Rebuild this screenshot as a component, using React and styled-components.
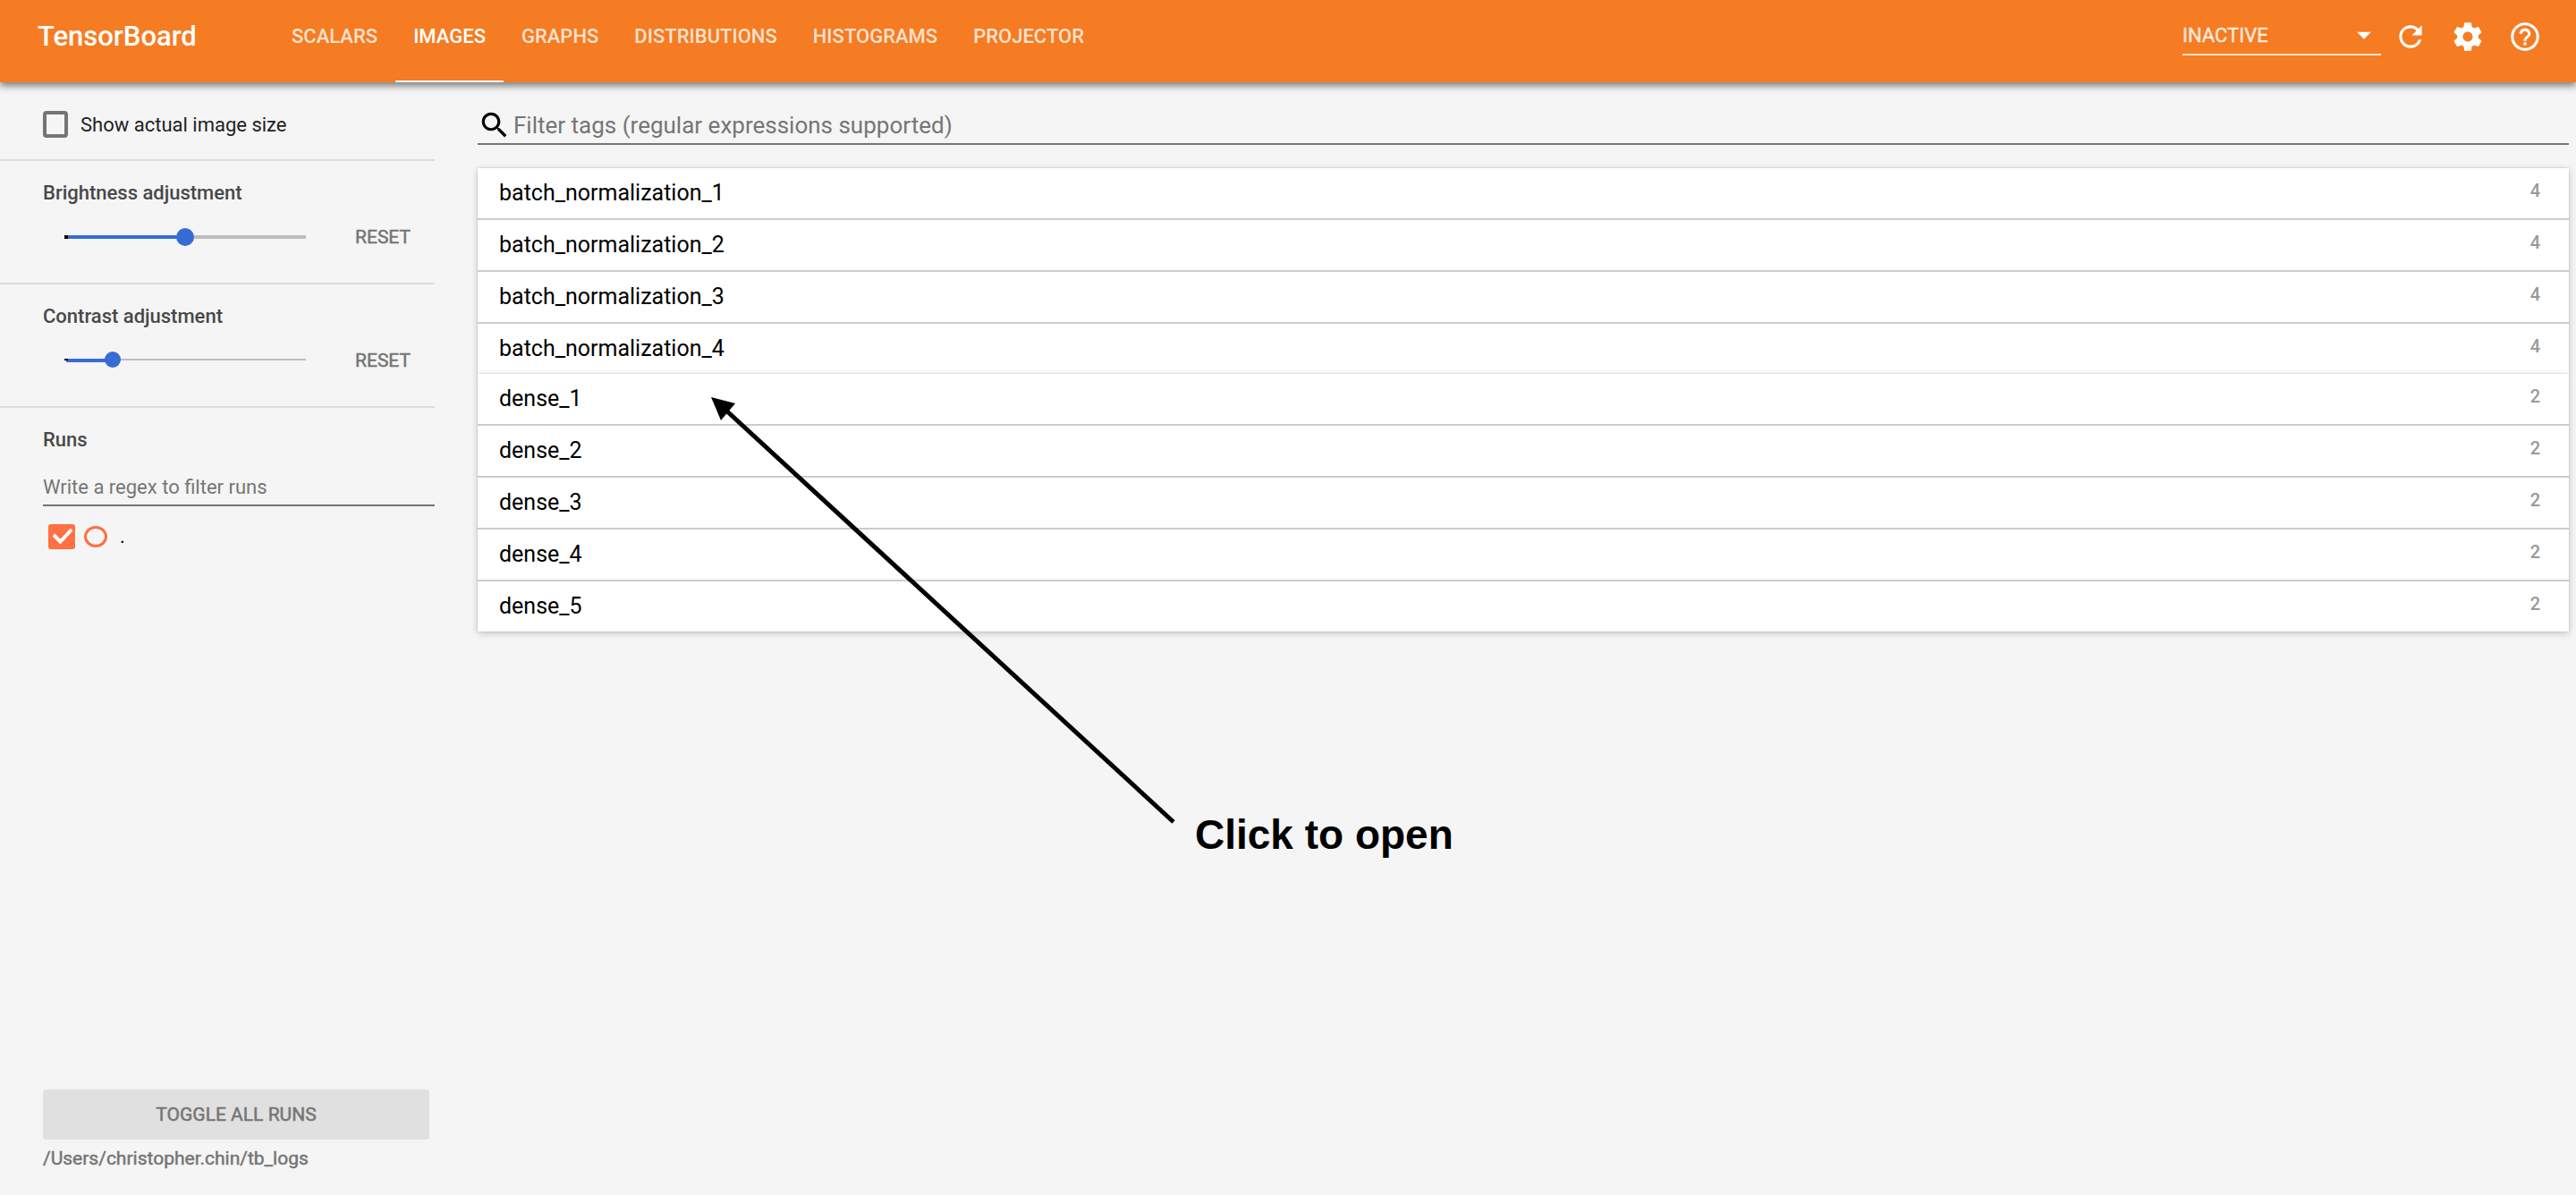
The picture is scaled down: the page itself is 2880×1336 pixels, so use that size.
import React, { useState } from "react";
import styled, { createGlobalStyle } from "styled-components";

const GlobalStyle = createGlobalStyle`
  *, *::before, *::after { box-sizing: border-box; }
  body { margin: 0; background: #f5f5f5; font-family: Roboto, "Liberation Sans", sans-serif; }
  button, input, select { font-family: inherit; margin: 0; }
`;

const Page = styled.div`
  display: flex;
  flex-direction: column;
  min-height: 100vh;
  position: relative;
`;

const Toolbar = styled.header`
  display: flex;
  align-items: stretch;
  height: 92px;
  padding: 0 26px 0 42px;
  background: #f57c22;
  color: #fff;
  box-shadow: 0 4px 8px rgba(0, 0, 0, 0.5);
`;

const Title = styled.h1`
  width: 264px;
  margin: 0;
  font-size: 31px;
  font-weight: 500;
  line-height: 82px;
`;

const Tabs = styled.nav`
  display: flex;
  flex: 1;
`;

const Tab = styled.a`
  padding: 0 20px;
  font-size: 22px;
  font-weight: 500;
  line-height: 82px;
  text-decoration: none;
  color: ${(p) => (p.$active ? "#fff" : "rgba(255, 255, 255, 0.78)")};
  border-bottom: 2px solid ${(p) => (p.$active ? "#fff" : "transparent")};
`;

const Actions = styled.div`
  display: flex;
  align-items: flex-start;
  padding-top: 18px;
`;

const SelectWrap = styled.label`
  display: flex;
  align-items: center;
  width: 222px;
  height: 44px;
  border-bottom: 2px solid rgba(255, 255, 255, 0.78);
`;

const StatusSelect = styled.select`
  flex: 1;
  appearance: none;
  border: 0;
  padding: 2px 0 0;
  background: transparent;
  color: rgba(255, 255, 255, 0.78);
  font-size: 22px;
  line-height: 44px;
  -webkit-text-stroke: 0.5px rgba(255, 255, 255, 0.78);
`;

const Caret = styled.svg`
  width: 38px;
  height: 38px;
`;

const IconButton = styled.button`
  display: flex;
  padding: 4px 12px 4px 14px;
  border: 0;
  background: none;
  color: #fff;
  svg { width: 38px; height: 38px; fill: currentColor; }
`;

const Body = styled.div`
  display: flex;
  flex: 1;
`;

const Sidebar = styled.aside`
  display: flex;
  flex-direction: column;
  width: 486px;
  flex: none;
  margin-right: 48px;
`;

const Section = styled.section`
  display: flex;
  flex-direction: column;
  height: ${(p) => p.$height}px;
  padding-left: 48px;
  border-bottom: 2px solid #dcdcdc;
`;

const CheckLabel = styled.label`
  display: flex;
  align-items: flex-start;
  gap: 14px;
  padding-top: 32px;
  font-size: 22px;
  line-height: 32px;
  color: #212121;
`;

const Checkbox = styled.input`
  appearance: none;
  width: 28px;
  height: 30px;
  border: 4px solid #757575;
  border-radius: 4px;
`;

const Heading = styled.h2`
  margin: 0;
  padding-top: 21px;
  font-size: 22px;
  font-weight: 500;
  line-height: 30px;
  color: #484848;
`;

const SliderRow = styled.div`
  display: flex;
  align-items: center;
  height: 40px;
  margin-top: 14px;
  padding-left: 24px;
`;

const Slider = styled.input`
  appearance: none;
  width: 270px;
  height: 20px;
  background: none;
  &::-webkit-slider-runnable-track {
    height: 4px;
    background:
      linear-gradient(#000, #000) 0 0 / 4px ${(p) => p.$line}px no-repeat,
      linear-gradient(#376bd6, #376bd6) 2px 0 / ${(p) => p.$fill}% 4px no-repeat,
      linear-gradient(#bdbdbd, #bdbdbd) 0 0 / 100% ${(p) => p.$line}px no-repeat;
  }
  &::-webkit-slider-thumb {
    appearance: none;
    width: ${(p) => p.$knob}px;
    height: ${(p) => p.$knob}px;
    margin-top: ${(p) => (p.$line - p.$knob) / 2}px;
    border-radius: 50%;
    background: #376bd6;
  }
`;

const ResetButton = styled.button`
  margin-left: 41px;
  padding: 0 14px;
  border: 0;
  background: none;
  font-size: 21px;
  line-height: 40px;
  color: #757575;
  -webkit-text-stroke: 0.5px #757575;
`;

const Runs = styled.section`
  display: flex;
  flex-direction: column;
  flex: 1;
  padding-left: 48px;
`;

const RunsInput = styled.input`
  height: 44px;
  margin-top: 15px;
  padding: 2px 0 0;
  border: 0;
  border-bottom: 2px solid #757575;
  background: none;
  font-size: 22px;
  &::placeholder { color: #757575; opacity: 1; }
`;

const RunRow = styled.label`
  display: flex;
  align-items: center;
  gap: 10px;
  padding: 18px 0 0 6px;
  font-size: 22px;
  line-height: 32px;
`;

const RunCheck = styled.span`
  position: relative;
  display: flex;
  input {
    appearance: none;
    width: 30px;
    height: 28px;
    border-radius: 3px;
    background: #ff7043;
  }
  svg {
    position: absolute;
    inset: 0;
    pointer-events: none;
  }
`;

const RunDot = styled.span`
  width: 26px;
  height: 24px;
  margin-right: 4px;
  border: 3px solid #ff7043;
  border-radius: 50%;
`;

const ToggleButton = styled.button`
  height: 56px;
  margin: auto 6px 0 0;
  border: 0;
  border-radius: 4px;
  background: #e0e0e0;
  font-size: 21px;
  color: #757575;
  -webkit-text-stroke: 0.5px #757575;
`;

const LogDir = styled.p`
  margin: 0;
  padding: 6px 0 26px;
  font-size: 21px;
  line-height: 30px;
  color: #757575;
  -webkit-text-stroke: 0.5px #757575;
`;

const Main = styled.main`
  flex: 1;
  min-width: 0;
  padding: 26px 8px 0 0;
`;

const Search = styled.label`
  display: flex;
  align-items: center;
  gap: 2px;
  height: 44px;
  padding-top: 2px;
  border-bottom: 2px solid #757575;
  svg { width: 38px; height: 38px; }
`;

const SearchInput = styled.input`
  flex: 1;
  padding: 0;
  border: 0;
  background: none;
  font-size: 26px;
  &::placeholder { color: #757575; opacity: 1; }
`;

const Groups = styled.div`
  padding-top: 26px;
`;

const Group = styled.div`
  position: relative;
  display: flex;
  flex-direction: column;
  gap: 2px;
  background: #ccc;
  box-shadow: 0 0 2px rgba(0, 0, 0, 0.15), 0 2px 8px rgba(0, 0, 0, 0.2);
`;

const TagRow = styled.button`
  display: flex;
  justify-content: space-between;
  height: 56px;
  padding: 12px 32px 0 24px;
  border: 0;
  background: #fff;
  font-size: 25px;
  line-height: 32px;
  color: #000;
`;

const Count = styled.span`
  font-size: 20px;
  font-weight: 500;
  line-height: 26px;
  color: #999;
`;

const Arrow = styled.svg`
  position: absolute;
  left: 790px;
  top: 440px;
  pointer-events: none;
`;

const Note = styled.p`
  position: absolute;
  left: 1336px;
  top: 906px;
  margin: 0;
  font: 700 46px/54px "Liberation Sans", Arial, sans-serif;
  color: #000;
`;

const TABS = ["SCALARS", "IMAGES", "GRAPHS", "DISTRIBUTIONS", "HISTOGRAMS", "PROJECTOR"];

const GROUPS = [
  { count: 4, tags: ["batch_normalization_1", "batch_normalization_2", "batch_normalization_3", "batch_normalization_4"] },
  { count: 2, tags: ["dense_1", "dense_2", "dense_3", "dense_4", "dense_5"] },
];

const ICONS = {
  Reload: "M17.65 6.35C16.2 4.9 14.21 4 12 4c-4.42 0-7.99 3.58-7.99 8s3.57 8 7.99 8c3.73 0 6.84-2.55 7.73-6h-2.08c-.82 2.33-3.04 4-5.65 4-3.31 0-6-2.69-6-6s2.69-6 6-6c1.66 0 3.14.69 4.22 1.78L13 11h7V4l-2.35 2.35z",
  Settings: "M19.43 12.98c.04-.32.07-.64.07-.98s-.03-.66-.07-.98l2.11-1.65c.19-.15.24-.42.12-.64l-2-3.46c-.12-.22-.39-.3-.61-.22l-2.49 1c-.52-.4-1.08-.73-1.69-.98l-.38-2.65C14.46 2.18 14.25 2 14 2h-4c-.25 0-.46.18-.49.42l-.38 2.65c-.61.25-1.17.59-1.69.98l-2.49-1c-.23-.09-.49 0-.61.22l-2 3.46c-.13.22-.07.49.12.64l2.11 1.65c-.04.32-.07.65-.07.98s.03.66.07.98l-2.11 1.65c-.19.15-.24.42-.12.64l2 3.46c.12.22.39.3.61.22l2.49-1c.52.4 1.08.73 1.69.98l.38 2.65c.03.24.24.42.49.42h4c.25 0 .46-.18.49-.42l.38-2.65c.61-.25 1.17-.59 1.69-.98l2.49 1c.23.09.49 0 .61-.22l2-3.46c.12-.22.07-.49-.12-.64l-2.11-1.65zM12 15.5c-1.93 0-3.5-1.57-3.5-3.5s1.57-3.5 3.5-3.5 3.5 1.57 3.5 3.5-1.57 3.5-3.5 3.5z",
  Help: "M11 18h2v-2h-2v2zm1-16C6.48 2 2 6.48 2 12s4.48 10 10 10 10-4.48 10-10S17.52 2 12 2zm0 18c-4.41 0-8-3.59-8-8s3.59-8 8-8 8 3.59 8 8-3.59 8-8 8zm0-14c-2.21 0-4 1.79-4 4h2c0-1.1.9-2 2-2s2 .9 2 2c0 2-3 1.75-3 5h2c0-2.25 3-2.5 3-5 0-2.21-1.79-4-4-4z",
};

function Adjustment({ title, initial, line, knob, height }) {
  const [value, setValue] = useState(initial);
  return (
    <Section $height={height}>
      <Heading>{title}</Heading>
      <SliderRow>
        <Slider
          type="range"
          aria-label={title}
          value={value}
          $fill={value}
          $line={line}
          $knob={knob}
          onChange={(e) => setValue(Number(e.target.value))}
        />
        <ResetButton type="button" onClick={() => setValue(initial)}>RESET</ResetButton>
      </SliderRow>
    </Section>
  );
}

export default function App() {
  return (
    <Page>
      <GlobalStyle />
      <Toolbar>
        <Title>TensorBoard</Title>
        <Tabs>
          {TABS.map((t) => (
            <Tab key={t} href={`#${t.toLowerCase()}`} $active={t === "IMAGES"}>{t}</Tab>
          ))}
        </Tabs>
        <Actions>
          <SelectWrap>
            <StatusSelect aria-label="Status">
              <option>INACTIVE</option>
            </StatusSelect>
            <Caret viewBox="0 0 24 24" fill="#fff"><path d="M7 10l5 5 5-5z" /></Caret>
          </SelectWrap>
          {Object.entries(ICONS).map(([name, d]) => (
            <IconButton key={name} type="button" aria-label={name}>
              <svg viewBox="0 0 24 24"><path d={d} /></svg>
            </IconButton>
          ))}
        </Actions>
      </Toolbar>
      <Body>
        <Sidebar>
          <Section $height={88}>
            <CheckLabel>
              <Checkbox type="checkbox" />
              Show actual image size
            </CheckLabel>
          </Section>
          <Adjustment title="Brightness adjustment" initial={50} line={4} knob={20} height={138} />
          <Adjustment title="Contrast adjustment" initial={18} line={2} knob={18} height={138} />
          <Runs>
            <Heading>Runs</Heading>
            <RunsInput aria-label="Filter runs" placeholder="Write a regex to filter runs" />
            <RunRow>
              <RunCheck>
                <input type="checkbox" defaultChecked />
                <svg width="30" height="28" viewBox="0 0 30 28" fill="none" stroke="#fff" strokeWidth="4">
                  <path d="M6 12l7.500 7.500L26 6" />
                </svg>
              </RunCheck>
              <RunDot />
              .
            </RunRow>
            <ToggleButton type="button">TOGGLE ALL RUNS</ToggleButton>
            <LogDir>/Users/christopher.chin/tb_logs</LogDir>
          </Runs>
        </Sidebar>
        <Main>
          <Search>
            <svg viewBox="0 0 24 24"><path d="M15.500 14h-.79l-.28-.27C15.410 12.590 16 11.110 16 9.500 16 5.910 13.090 3 9.500 3S3 5.910 3 9.500 5.910 16 9.500 16c1.610 0 3.090-.59 4.230-1.570l.27.28v.79l5 4.990L20.490 19l-4.990-5zm-6 0C7.010 14 5 11.990 5 9.500S7.010 5 9.500 5 14 7.010 14 9.500 11.990 14 9.500 14z" /></svg>
            <SearchInput aria-label="Filter tags" placeholder="Filter tags (regular expressions supported)" />
          </Search>
          <Groups>
            {GROUPS.map((g) => (
              <Group key={g.count}>
                {g.tags.map((t) => (
                  <TagRow key={t} type="button">
                    {t}
                    <Count>{g.count}</Count>
                  </TagRow>
                ))}
              </Group>
            ))}
          </Groups>
        </Main>
      </Body>
      <Arrow width="530" height="490" viewBox="790 440 530 490">
        <path d="M812 459L1312 919" stroke="#000" strokeWidth="5" />
        <path d="M795 444L822 451L806 470Z" />
      </Arrow>
      <Note>Click to open</Note>
    </Page>
  );
}
